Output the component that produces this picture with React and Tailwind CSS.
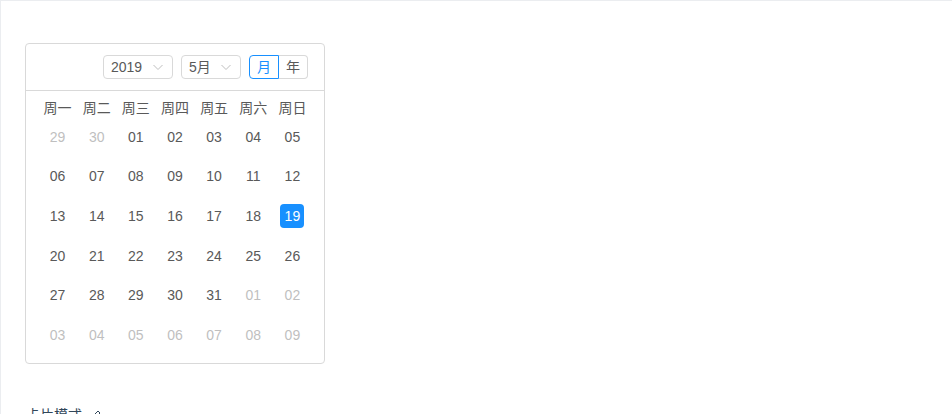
import React from 'react';

const weekDays = ['周一', '周二', '周三', '周四', '周五', '周六', '周日'];

const buildDays = () => {
  const days = [];
  days.push({ label: '29', muted: true }, { label: '30', muted: true });
  for (let d = 1; d <= 31; d++) days.push({ label: String(d).padStart(2, '0'), muted: false });
  for (let d = 1; d <= 9; d++) days.push({ label: String(d).padStart(2, '0'), muted: true });
  return days;
};

const Chevron = () => (
  <svg width="12" height="12" viewBox="0 0 12 12" fill="none" className="shrink-0">
    <path d="M1.5 4 L6 8.5 L10.5 4" stroke="#bfbfbf" strokeWidth="1" />
  </svg>
);

const MiniSelect = ({ value, width }) => (
  <div
    className={`ml-2 flex h-6 items-center justify-between rounded border border-[#d9d9d9] bg-white pl-[7px] pr-[8px] text-sm text-[#595959] ${width}`}
  >
    <span className="leading-[22px]">{value}</span>
    <Chevron />
  </div>
);

export default function App() {
  const days = buildDays();

  return (
    <div className="h-[414px] overflow-hidden bg-white" style={{ fontFamily: '"Liberation Sans", "Noto Sans CJK SC", sans-serif' }}>
      <div className="border-l border-t border-[#ebedf0]">
        <div className="px-6 pt-[42px] pb-[41px]">
          <div className="w-[300px] rounded border border-[#d9d9d9] bg-white">
            {/* header */}
            <div className="flex items-center justify-end border-b border-[#d9d9d9] py-[11px] pr-4">
              <MiniSelect value="2019" width="w-[70px]" />
              <MiniSelect value="5月" width="w-[60px]" />
              <div className="ml-2 flex h-6 text-sm leading-[22px]">
                <div className="flex w-[30px] items-center justify-center rounded-l border border-[#1890ff] text-[#1890ff]">月</div>
                <div className="flex w-[29px] items-center justify-center rounded-r border border-l-0 border-[#d9d9d9] text-[#595959]">年</div>
              </div>
            </div>

            {/* body */}
            <div className="px-3 py-2">
              <div className="grid h-[256px] grid-cols-7 grid-rows-[18px_repeat(6,1fr)] text-sm">
                {weekDays.map((w) => (
                  <div key={w} className="text-center leading-[18px] text-[#595959]">{w}</div>
                ))}
                {days.map((d, i) => {
                  const selected = !d.muted && d.label === '19';
                  return (
                    <div key={i} className="flex items-center justify-center">
                      <div
                        className={`h-6 w-6 rounded-sm text-center leading-6 ${
                          selected ? 'bg-[#1890ff] text-white' : d.muted ? 'text-[#bfbfbf]' : 'text-[#595959]'
                        }`}
                      >
                        {d.label}
                      </div>
                    </div>
                  );
                })}
              </div>
            </div>
          </div>
        </div>

        <div className="flex items-center gap-2 px-[25px] text-sm text-[#314659]">
          <span>卡片模式</span>
          <svg width="12" height="12" viewBox="0 0 12 12" fill="none">
            <path d="M2 10 L2.5 7.5 L8 2 L10 4 L4.5 9.5 Z" stroke="#314659" strokeWidth="1" />
          </svg>
        </div>
      </div>
    </div>
  );
}
